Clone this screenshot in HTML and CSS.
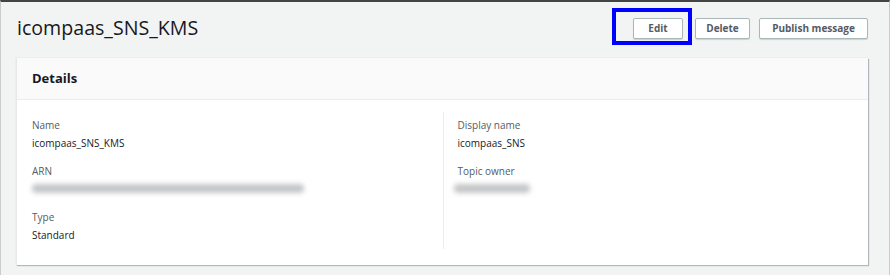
FILE: index.html
```html
<!DOCTYPE html>
<html>
<head>
<meta charset="utf-8">
<link rel="stylesheet" href="styles.css">
</head>
<body>
<div class="page">
  <div class="head">
    <h1 class="title">icompaas_SNS_KMS</h1>
    <div class="actions">
      <div class="focus"><button class="btn btn-edit">Edit</button></div>
      <button class="btn btn-delete">Delete</button>
      <button class="btn btn-publish">Publish message</button>
    </div>
  </div>
  <div class="card">
    <div class="card-head">Details</div>
    <div class="card-body">
      <div class="col">
        <div class="field">
          <div class="label">Name</div>
          <div class="value">icompaas_SNS_KMS</div>
        </div>
        <div class="field">
          <div class="label">ARN</div>
          <div class="value"><span class="blur arn"></span></div>
        </div>
        <div class="field">
          <div class="label">Type</div>
          <div class="value">Standard</div>
        </div>
      </div>
      <div class="col col-right">
        <div class="field">
          <div class="label">Display name</div>
          <div class="value">icompaas_SNS</div>
        </div>
        <div class="field">
          <div class="label">Topic owner</div>
          <div class="value"><span class="blur owner"></span></div>
        </div>
      </div>
    </div>
  </div>
</div>
</body>
</html>
```

FILE: styles.css
```css
html, body {
  margin: 0;
  padding: 0;
  background: #f2f3f3;
}
body {
  font-family: "Open Sans", "Noto Sans", Arial, sans-serif;
  color: #16191f;
  width: 890px;
  height: 275px;
  overflow: hidden;
}
.page {
  box-sizing: border-box;
  height: 275px;
  border-top: 2px solid #444;
  border-left: 1px solid #c8cccc;
  border-right: 1px solid #c8cccc;
  padding: 0 21px 0 15px;
}
.head {
  display: flex;
  justify-content: space-between;
  align-items: center;
  height: 53px;
}
.title {
  margin: 0;
  font-size: 19.6px;
  font-weight: 400;
  color: #16191f;
  padding-left: 1px;
  position: relative;
  top: -1px;
}
.actions {
  display: flex;
  align-items: center;
  margin-top: -1px;
}
.focus {
  border: 4px solid #0000ff;
  padding: 6px 5px 2px 17px;
  margin-top: -4px;
  margin-right: 3px;
}
.btn {
  font-family: "Open Sans", "Noto Sans", Arial, sans-serif;
  font-size: 10px;
  font-weight: 700;
  color: #545b64;
  background: #ffffff;
  border: 1px solid #aab7b8;
  border-radius: 2px;
  height: 21px;
  padding: 0;
  box-shadow: 0 1px 1px rgba(0,0,0,0.15);
  line-height: 19px;
  display: block;
}
.btn-edit { width: 50px; }
.btn-delete { width: 55px; margin-right: 9px; }
.btn-publish { width: 109px; }
.card {
  margin-top: 3px;
  background: #fff;
  border-left: 1px solid #e6e9e9;
  box-shadow: 1px 1px 1px rgba(0,22,40,0.25), 0 0 1px rgba(0,22,40,0.15);
  height: 207px;
}
.card-head {
  height: 41px;
  background: #fafafa;
  border-bottom: 1px solid #eaeded;
  font-size: 13px;
  font-weight: 700;
  padding-left: 15px;
  line-height: 40px;
}
.card-body {
  display: flex;
  padding: 12px 0 0 15px;
}
.col {
  width: 412px;
  display: flex;
  flex-direction: column;
}
.col-right {
  border-left: 1px solid #eaeded;
  padding-left: 14px;
  height: 137px;
}
.field {
  margin-bottom: 7px;
}
.label {
  font-size: 10px;
  color: #545b64;
  line-height: 16px;
  margin-top: 5px;
}
.value {
  font-size: 10px;
  color: #16191f;
  line-height: 16px;
  margin-top: 2px;
  height: 16px;
}
.blur {
  display: inline-block;
  height: 9px;
  margin-top: 3px;
  background: #c4c6c8;
  border-radius: 4px;
  filter: blur(2.5px);
}
.arn { width: 272px; }
.owner { width: 76px; margin-left: -4px; }
```
